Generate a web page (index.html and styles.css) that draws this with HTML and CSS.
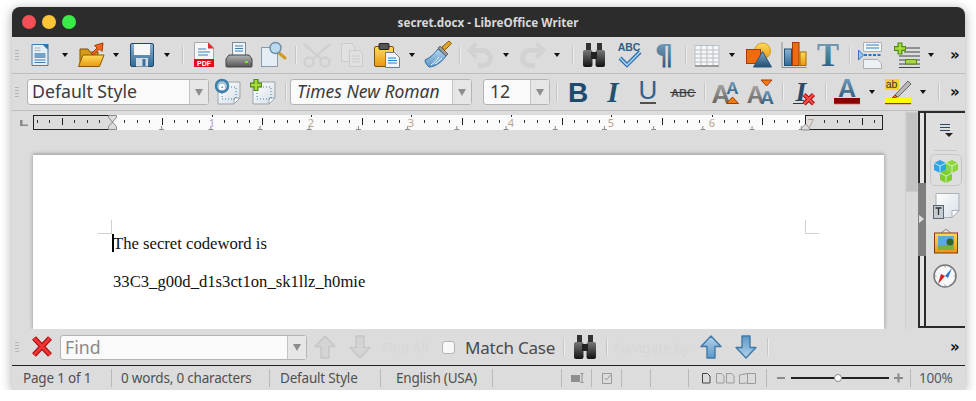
FILE: index.html
```html
<!DOCTYPE html>
<html lang="en">
<head>
    <meta charset="UTF-8">
    <title>secret.docx - LibreOffice Writer</title>
    <link rel="stylesheet" href="styles.css">
</head>
<body>
    <!-- shared gradients and repeated icons -->
    <svg class="defs" width="0" height="0">
        <defs>
            <linearGradient id="gBlue" x1="0" y1="0" x2="0" y2="1"><stop offset="0" stop-color="#8db3d2"/><stop offset="1" stop-color="#2f6a97"/></linearGradient>
            <linearGradient id="gSteel" x1="0" y1="0" x2="0" y2="1"><stop offset="0" stop-color="#7fa8c4"/><stop offset="1" stop-color="#234f73"/></linearGradient>
            <linearGradient id="gGold" x1="0" y1="0" x2="0" y2="1"><stop offset="0" stop-color="#ffdc5c"/><stop offset="1" stop-color="#e8980f"/></linearGradient>
            <linearGradient id="gGray" x1="0" y1="0" x2="0" y2="1"><stop offset="0" stop-color="#b4b4b4"/><stop offset="1" stop-color="#555"/></linearGradient>
            <linearGradient id="gBlack" x1="0" y1="0" x2="0" y2="1"><stop offset="0" stop-color="#777"/><stop offset="1" stop-color="#111"/></linearGradient>
            <linearGradient id="gSky" x1="0" y1="0" x2="0" y2="1"><stop offset="0" stop-color="#b4d4ec"/><stop offset="1" stop-color="#5d97c6"/></linearGradient>
            <linearGradient id="gPaper" x1="0" y1="0" x2="1" y2="1"><stop offset="0" stop-color="#fff"/><stop offset="1" stop-color="#d5dee6"/></linearGradient>
            <symbol id="binoculars" viewBox="0 0 28 28">
                <rect x="6" y="2" width="5" height="8" fill="#333"/>
                <rect x="17" y="2" width="5" height="8" fill="#333"/>
                <rect x="3" y="9" width="9.5" height="17" rx="2" fill="url(#gBlack)"/>
                <rect x="15.5" y="9" width="9.5" height="17" rx="2" fill="url(#gBlack)"/>
                <rect x="11" y="11" width="6" height="7" fill="#222"/>
            </symbol>
            <symbol id="arrow-disabled" viewBox="0 0 28 28">
                <path d="M14 3L24 13.5h-6V25h-8V13.5H4z" fill="#d4d4d4" stroke="#c6c6c6" stroke-width="1.4" stroke-linejoin="round"/>
            </symbol>
            <symbol id="arrow-blue" viewBox="0 0 28 28">
                <path d="M14 3L24 13.5h-6V25h-8V13.5H4z" fill="url(#gSky)" stroke="#3f79a9" stroke-width="1.4" stroke-linejoin="round"/>
            </symbol>
            <symbol id="style-doc" viewBox="0 0 28 28">
                <path d="M4 4h22v16l-6 6H4z" fill="url(#gPaper)" stroke="#9aa5ae"/>
                <path d="M26 20h-6v6z" fill="#fff" stroke="#9aa5ae"/>
                <path d="M8 9h14v12H8z" fill="none" stroke="#3f7fa8" stroke-dasharray="1 2"/>
            </symbol>
        </defs>
    </svg>

    <div class="window">
        <div class="titlebar">
            <div class="lights">
                <span class="light red"></span>
                <span class="light yellow"></span>
                <span class="light green"></span>
            </div>
            <div class="title">secret.docx - LibreOffice Writer</div>
        </div>

        <!-- standard toolbar -->
        <div class="toolbar">
            <span class="grip"></span>
            <span class="btn"><svg class="ic" viewBox="0 0 28 28"><path d="M6 3.500h11l5 5v16H6z" fill="#e6eef5" stroke="#4a7ba3"/><path d="M16.500 3h6v6z" fill="#2f74a8"/><path d="M8.500 7h6" stroke="#a9b4bd"/><path d="M8.500 9.500h6" stroke="#a9b4bd"/><rect x="8.500" y="12" width="11" height="5" fill="#6fa3cc"/><path d="M8.500 19h11M8.500 21.500h11" stroke="#3f7fb0"/></svg></span>
            <span class="drop"></span>
            <span class="btn"><svg class="ic" viewBox="0 0 28 28"><path d="M3 25V8h8l2 3h8v14z" fill="#d69a1a" stroke="#7a5200"/><path d="M1.500 25.500L6 14h21l-4.500 11.500z" fill="url(#gGold)" stroke="#8a5a00"/><path d="M14 13l6-6-2.500-2.500L26 2l-1 8.500-2.500-2.500-6 6z" fill="#f0641e" stroke="#a83a00" stroke-linejoin="round"/></svg></span>
            <span class="drop"></span>
            <span class="btn"><svg class="ic" viewBox="0 0 28 28"><rect x="2.500" y="2.500" width="23" height="23" rx="1.500" fill="url(#gBlue)" stroke="#22496b"/><rect x="6" y="3" width="16" height="11" fill="#f4f6f8"/><rect x="8" y="17" width="12" height="8.500" fill="#d5dde4"/><rect x="14.500" y="18" width="3" height="7" fill="#3f6f9b"/></svg></span>
            <span class="drop"></span>
            <span class="sep"></span>
            <span class="btn"><svg class="ic" viewBox="0 0 28 28"><path d="M4.500 1.500h14l5 5v12h-19z" fill="#f6f6f6" stroke="#aaa"/><path d="M18 1.500l6 6h-6z" fill="#e8232a"/><path d="M8 8h8M8 11h12M8 14h10" stroke="#3b7fb8"/><rect x="4" y="18" width="20" height="8" fill="#d9101c"/><text class="svg-bold" x="14" y="24.600" font-size="7" fill="#fff" text-anchor="middle">PDF</text></svg></span>
            <span class="btn"><svg class="ic" viewBox="0 0 28 28"><rect x="7.500" y="1.500" width="13" height="14" fill="#f0f4f7" stroke="#7f8b95"/><path d="M10 5h8M10 7.500h8M10 10h8" stroke="#3b7fb8"/><path d="M4 14h20l3 4v7a1 1 0 0 1-1 1H2a1 1 0 0 1-1-1v-7z" fill="url(#gGray)" stroke="#444"/><rect x="20" y="20" width="3" height="2" fill="#7ee23c"/></svg></span>
            <span class="btn"><svg class="ic" viewBox="0 0 28 28"><rect x="1.500" y="6.500" width="16" height="19" fill="#e6eef5" stroke="#8a9aa8"/><path d="M19 12l6 5" stroke="#d19a22" stroke-width="3" stroke-linecap="round"/><circle cx="15.500" cy="7" r="5.500" fill="#bcd9ef" stroke="#6d8ea8" stroke-width="1.400"/></svg></span>
            <span class="sep"></span>
            <span class="btn"><svg class="ic" viewBox="0 0 28 28" fill="none" stroke="#d0d0d0" stroke-width="2.400"><path d="M1 3l17 15M27 3L10 18"/><circle cx="6" cy="21" r="4.500"/><circle cx="22" cy="21" r="4.500"/></svg></span>
            <span class="btn"><svg class="ic" viewBox="0 0 28 28" fill="#e0e0e0" stroke="#cbcbcb"><path d="M3.500 2.500h10l3 3v15h-13z"/><path d="M11.500 9.500h10l3 3v13h-13z"/><path d="M14 15h8M14 18h8M14 21h8" fill="none"/></svg></span>
            <span class="btn"><svg class="ic" viewBox="0 0 28 28"><rect x="1.500" y="5.500" width="19" height="20" rx="1.500" fill="url(#gGold)" stroke="#7a5200"/><rect x="6" y="2.500" width="10" height="6" rx="1" fill="#555" stroke="#222"/><path d="M12.500 11.500h9l5 5v10h-14z" fill="#f2f6fa" stroke="#6d7f8e"/><path d="M15 17h8M15 19.500h9M15 22h9" stroke="#2f7fc0"/></svg></span>
            <span class="drop"></span>
            <span class="btn"><svg class="ic" viewBox="0 0 28 28"><path d="M1 19C6 17 11 12 14 8l8 7c-4 6-11 11-17 11-2-2-4-4-4-7z" fill="url(#gSky)" stroke="#2e6ea6"/><path d="M7 24c3-2 6-5 8-8M11 23c3-2 5-4 7-6" stroke="#fff" fill="none"/><path d="M14 7l8 8 2-2-8-8z" fill="#9a9a9a" stroke="#666"/><path d="M18 6l7-6 2.500 2.500-7 7z" fill="#e0a32c" stroke="#8a5a00"/></svg></span>
            <span class="sep"></span>
            <span class="btn"><svg class="ic" viewBox="0 0 28 28" fill="none" stroke="#d2d2d2" stroke-width="5"><path d="M4 9.500h12a7.500 7.500 0 0 1 0 15h-5"/><path d="M9.500 2.500L2.500 9.500l7 7" stroke-width="4"/></svg></span>
            <span class="drop"></span>
            <span class="btn"><svg class="ic flip" viewBox="0 0 28 28" fill="none" stroke="#d2d2d2" stroke-width="5"><path d="M4 9.500h12a7.500 7.500 0 0 1 0 15h-5"/><path d="M9.500 2.500L2.500 9.500l7 7" stroke-width="4"/></svg></span>
            <span class="drop"></span>
            <span class="sep"></span>
            <span class="btn"><svg class="ic" viewBox="0 0 28 28"><use href="#binoculars"/></svg></span>
            <span class="btn"><svg class="ic" viewBox="0 0 28 28"><text class="svg-bold" x="14" y="10" font-size="10.500" fill="#2f5f88" text-anchor="middle">ABC</text><path d="M5 17l7 7L25 11" fill="none" stroke="#2a6cb0" stroke-width="4"/><path d="M5 17l7 7L25 11" fill="none" stroke="#a6d0ef" stroke-width="1.600"/></svg></span>
            <span class="btn"><svg class="ic" viewBox="0 0 28 28"><text class="svg-dejavu" x="14" y="24" font-size="29" fill="url(#gSteel)" text-anchor="middle">¶</text></svg></span>
            <span class="sep"></span>
            <span class="btn"><svg class="ic" viewBox="0 0 28 28"><rect x="2" y="4.500" width="24" height="20" fill="#f4f6f8"/><path d="M2 4.500h24M2 9h24M2 13h24M2 17h24M2 21h24M2 4.500v20M8 4.500v20M14 4.500v20M20 4.500v20M26 4.500v20" stroke="#b9bfc4" fill="none"/><path d="M2 25h24" stroke="#9b9b9b" stroke-width="2"/></svg></span>
            <span class="drop"></span>
            <span class="btn"><svg class="ic" viewBox="0 0 28 28"><circle cx="18.500" cy="10" r="8" fill="url(#gGold)" stroke="#d99a1a"/><rect x="2.500" y="8.500" width="14" height="14" fill="#f06a10" stroke="#a53b00"/><path d="M18.500 10.500l9 15.500h-18z" fill="url(#gSteel)" stroke="#2a5578"/></svg></span>
            <span class="btn"><svg class="ic" viewBox="0 0 28 28"><path d="M3 1v25.500h24.500" fill="none" stroke="#8d8d8d"/><rect x="5.500" y="8" width="7" height="16.500" fill="url(#gBlue)" stroke="#234f73"/><rect x="13.500" y="1.500" width="6.500" height="23" fill="#ef6a14" stroke="#a53b00"/><rect x="21" y="11" width="6" height="13.500" fill="url(#gGold)" stroke="#a06b00"/></svg></span>
            <span class="btn"><svg class="ic" viewBox="0 0 28 28"><text class="svg-serif-bold" x="14" y="25" font-size="33" fill="url(#gSteel)" text-anchor="middle">T</text></svg></span>
            <span class="sep"></span>
            <span class="btn"><svg class="ic" viewBox="0 0 28 28"><path d="M6.500 1.500h18v9h-18z" fill="#f4f6f8" stroke="#a9b0b6"/><path d="M9 4h13M9 7h13" stroke="#2f7fc0"/><path d="M7 14h18" stroke="#2f74c8" stroke-width="2" stroke-dasharray="3 1.500"/><path d="M1.500 9l5 5-5 5z" fill="#9cc6ec" stroke="#2f74c8"/><path d="M6.500 18.500h14l4 4v5h-18z" fill="#eef1f4" stroke="#a9b0b6"/></svg></span>
            <span class="btn"><svg class="ic" viewBox="0 0 28 28"><path d="M7 7h21M12 11h16M7 15h21M7 19h8M25 19h3M7 23h21M7 26.500h21" stroke="#3c4650" stroke-width="1.200"/><rect x="13.500" y="18.500" width="11" height="4.500" fill="#a8d44a" stroke="#5f8a10"/><path d="M8 1.500v12M2 7.500h12" stroke="#4c8a10" stroke-width="5"/><path d="M8 2.500v10M3 7.500h10" stroke="#a8dc3c" stroke-width="2.600"/></svg></span>
            <span class="drop"></span>
            <span class="more">»</span>
        </div>

        <!-- formatting toolbar -->
        <div class="toolbar">
            <span class="grip grip-short"></span>
            <div class="combo style-box"><span class="combo-text">Default Style</span><span class="combo-arrow"></span></div>
            <span class="btn"><svg class="ic" viewBox="0 0 28 28"><use href="#style-doc"/><circle cx="8" cy="8" r="6" fill="none" stroke="#3f7fa8" stroke-width="2.600"/><path d="M4 9a4 3.500 0 0 1 8-1" fill="none" stroke="#8fc0dc" stroke-width="1.400"/></svg></span>
            <span class="btn"><svg class="ic" viewBox="0 0 28 28"><use href="#style-doc"/><path d="M7 1v12M1 7h12" stroke="#4c8a10" stroke-width="5"/><path d="M7 2v10M2 7h10" stroke="#a8dc3c" stroke-width="2.600"/></svg></span>
            <span class="sep sep-tight"></span>
            <div class="combo font-box"><span class="combo-text font-name">Times New Roman</span><span class="combo-arrow"></span></div>
            <div class="combo size-box"><span class="combo-text">12</span><span class="combo-arrow"></span></div>
            <span class="sep"></span>
            <span class="btn"><svg class="ic" viewBox="0 0 28 28"><text class="svg-bold" x="14" y="24" font-size="28" fill="#1f4a6e" text-anchor="middle">B</text></svg></span>
            <span class="btn"><svg class="ic" viewBox="0 0 28 28"><text class="svg-italic" x="14" y="24" font-size="29" fill="#234f73" text-anchor="middle">I</text></svg></span>
            <span class="btn"><svg class="ic" viewBox="0 0 28 28"><text class="svg-sans" x="14" y="21" font-size="26" fill="#33628a" text-anchor="middle">U</text><path d="M6 25h16" stroke="#222" stroke-width="1.400"/></svg></span>
            <span class="btn"><svg class="ic" viewBox="0 0 28 28"><text class="svg-bold" x="14" y="18.500" font-size="11" fill="#555" text-anchor="middle">ABC</text><path d="M1 14.500h26" stroke="#333" stroke-width="1.200"/></svg></span>
            <span class="sep"></span>
            <span class="btn"><svg class="ic" viewBox="0 0 28 28"><text class="svg-bold" x="9" y="25" font-size="26" fill="url(#gGray)" text-anchor="middle">A</text><text class="svg-bold" x="20.500" y="16" font-size="17" fill="url(#gSteel)" text-anchor="middle">A</text><path d="M20.500 19l6 6.500h-12z" fill="#f07a10" stroke="#a53b00"/></svg></span>
            <span class="btn"><svg class="ic" viewBox="0 0 28 28"><text class="svg-bold" x="8.500" y="25" font-size="24" fill="url(#gGray)" text-anchor="middle">A</text><text class="svg-bold" x="20" y="26" font-size="19" fill="url(#gSteel)" text-anchor="middle">A</text><path d="M19.500 8l-5.500-6h11z" fill="#f07a10" stroke="#a53b00"/></svg></span>
            <span class="sep"></span>
            <span class="btn"><svg class="ic" viewBox="0 0 28 28"><text class="svg-italic" x="11" y="23" font-size="28" fill="#2a4a66" text-anchor="middle">I</text><path d="M3 25.500h13" stroke="#333" stroke-width="1.200"/><path d="M14 16.500l9.500 9.500M23.500 16.500L14 26" stroke="#b01010" stroke-width="4.400"/><path d="M14 16.500l9.500 9.500M23.500 16.500L14 26" stroke="#ff4a4a" stroke-width="2"/></svg></span>
            <span class="sep"></span>
            <span class="btn"><svg class="ic" viewBox="0 0 28 28"><text class="svg-bold" x="14" y="19" font-size="25" fill="url(#gSteel)" text-anchor="middle">A</text><rect x="1" y="20" width="26" height="5" fill="#8b0000"/><rect x="1" y="25" width="26" height="1.200" fill="#f00"/></svg></span>
            <span class="drop"></span>
            <span class="btn"><svg class="ic" viewBox="0 0 28 28"><rect x="1" y="1" width="14" height="11" fill="#f4d32a"/><text class="svg-sans" x="7.500" y="10" font-size="10.500" fill="#333" text-anchor="middle">ab</text><path d="M11 17L24 3l3 3-13 13z" fill="#b9b9b9" stroke="#666"/><path d="M11 17l-3 3 5-1z" fill="#ef8a1c" stroke="#a53b00"/><rect x="1" y="20" width="26" height="5" fill="#ff0"/><rect x="1" y="25" width="26" height="1.200" fill="#f00"/></svg></span>
            <span class="drop"></span>
            <span class="sep"></span>
            <span class="more">»</span>
        </div>

        <div class="main">
            <div class="workspace">
                <div class="ruler-row">
                    <svg class="tab-corner" width="8" height="8" viewBox="0 0 8 8"><path d="M0 1h2.500v4.500H8V7H0z" fill="#8a8a8a"/></svg>
                    <svg class="ruler" width="850" height="18" viewBox="33 114 850 18" shape-rendering="crispEdges">
                        <defs>
                            <pattern id="ticks" x="112" y="114" width="100" height="18" patternUnits="userSpaceOnUse">
                                <path d="M12.500 6v3M25 6v3M37.500 6v3M62.500 6v3M75 6v3M87.500 6v3" stroke="#333"/>
                                <path d="M50 4v7" stroke="#222"/>
                            </pattern>
                            <pattern id="tabs" x="109" y="114" width="49.200" height="18" patternUnits="userSpaceOnUse">
                                <path d="M3 12v4M0.500 15.500h5" stroke="#8a8a8a"/>
                            </pattern>
                        </defs>
                        <rect x="112" y="115" width="693" height="15" fill="#fafafa"/>
                        <rect x="33.500" y="115.500" width="78.500" height="14" fill="#dcdcdc" stroke="#222"/>
                        <rect x="805" y="115.500" width="77" height="14" fill="#dcdcdc" stroke="#222"/>
                        <rect x="33" y="115" width="850" height="15" fill="url(#ticks)"/>
                        <rect x="140" y="115" width="665" height="17" fill="url(#tabs)"/>
                        <g class="ruler-nums" font-size="11" fill="#b8a590" text-anchor="middle" shape-rendering="auto">
                            <text x="212" y="127">1</text><text x="311" y="127">2</text><text x="411" y="127">3</text><text x="511" y="127">4</text><text x="611" y="127">5</text><text x="712" y="127">6</text><text x="811" y="127">7</text>
                        </g>
                        <path d="M212 115v2M311 115v2M411 115v2M511 115v2M611 115v2M712 115v2" stroke="#333"/>
                        <path d="M108.500 115.500h8v2l-4 4.500 4 4.500v3h-8v-3l4-4.500-4-4.500z" fill="#dcdcdc" stroke="#8a8a8a" shape-rendering="auto"/>
                        <path d="M801.500 130v-2l4-4 4 4v2z" fill="#dcdcdc" stroke="#8a8a8a" shape-rendering="auto"/>
                    </svg>
                </div>
                <div class="page">
                    <span class="crop crop-left"></span>
                    <span class="crop crop-right"></span>
                    <span class="cursor"></span>
                    <p>The secret codeword is</p>
                    <p>33C3_g00d_d1s3ct1on_sk1llz_h0mie</p>
                </div>
            </div>
            <div class="scrollbar"><div class="thumb"></div></div>
            <div class="deck">
                <div class="splitter"><span class="handle"></span></div>
                <div class="sidebar">
                    <svg class="side-menu" width="16" height="16" viewBox="0 0 16 16"><path d="M2 2.500h10M2 5.500h10M2 8.500h10" stroke="#2c4a66" stroke-width="1.200"/><path d="M7 11h8l-4 4z" fill="#222"/></svg>
                    <div class="side-sep"></div>
                    <div class="side-btn"><svg class="ic" viewBox="0 0 28 28"><path d="M2 7l6-3 6 3v7l-6 3-6-3z" fill="#2ea6e6"/><path d="M14 7l6-3 6 3v7l-6 3-6-3z" fill="#8ed63a"/><path d="M8 17l6-3 6 3v7l-6 3-6-3z" fill="#7fcf2c"/><path d="M2 7l6 3 6-3M8 10v7M14 7l6 3 6-3M20 10v7M8 17l6 3 6-3M14 20v7" fill="none" stroke="#e6f5ff" stroke-width=".8"/></svg></div>
                    <div class="side-cell"><svg class="ic" viewBox="0 0 28 28"><path d="M4 1.500h23v17l-7 7H4z" fill="url(#gPaper)" stroke="#a8b0b8"/><path d="M27 18.500h-7v7z" fill="#fff" stroke="#a8b0b8"/><rect x="1.500" y="13.500" width="10" height="13" fill="#c4ccd2" stroke="#5c6670"/><path d="M3.500 16h6M6.500 16v7" stroke="#333" stroke-width="1.300"/></svg></div>
                    <div class="side-cell"><svg class="ic" viewBox="0 0 28 28"><path d="M9 6l5-4 5 4" fill="none" stroke="#888"/><rect x="2.500" y="6" width="23" height="20" fill="url(#gGold)" stroke="#8a3a00"/><rect x="6" y="9" width="16" height="14" fill="#5ea8e0"/><path d="M6 18h16v5H6z" fill="#7ab03c"/><circle cx="18" cy="15" r="3.500" fill="#2f6a20"/></svg></div>
                    <div class="side-cell"><svg class="ic compass" viewBox="0 0 28 28"><circle cx="14" cy="14" r="11" fill="#f6f8fa" stroke="#777" stroke-width="1.500"/><path d="M14 14l7-8-4 10z" fill="#2f74d0"/><path d="M14 14l-7 8 3-10z" fill="#e01818"/><path d="M14 3.500v2M14 22.500v2M3.500 14h2M22.500 14h2" stroke="#999"/></svg></div>
                </div>
            </div>
        </div>

        <!-- find bar -->
        <div class="toolbar findbar">
            <span class="grip grip-find"></span>
            <span class="btn"><svg class="ic" viewBox="0 0 28 28"><path d="M6 5l16 17M22 5L6 22" stroke="#a80f0f" stroke-width="5.400"/><path d="M6 5l16 17M22 5L6 22" stroke="#f23434" stroke-width="3"/></svg></span>
            <div class="combo find-box"><span class="combo-text find-text">Find</span><span class="combo-arrow"></span></div>
            <span class="btn"><svg class="ic" viewBox="0 0 28 28"><use href="#arrow-disabled"/></svg></span>
            <span class="btn"><svg class="ic flip-v" viewBox="0 0 28 28"><use href="#arrow-disabled"/></svg></span>
            <span class="faint find-all">Find All</span>
            <span class="check"></span>
            <span class="match">Match Case</span>
            <span class="sep"></span>
            <span class="btn"><svg class="ic" viewBox="0 0 28 28"><use href="#binoculars"/></svg></span>
            <span class="sep"></span>
            <span class="faint nav-by">Navigate by</span>
            <span class="btn"><svg class="ic" viewBox="0 0 28 28"><use href="#arrow-blue"/></svg></span>
            <span class="btn"><svg class="ic flip-v" viewBox="0 0 28 28"><use href="#arrow-blue"/></svg></span>
            <span class="sep"></span>
            <span class="more">»</span>
        </div>

        <div class="statusbar">
            <span class="cell c-page">Page 1 of 1</span>
            <span class="cell c-words">0 words, 0 characters</span>
            <span class="cell c-style">Default Style</span>
            <span class="cell c-lang">English (USA)</span>
            <span class="cell c-blank"></span>
            <span class="cell c-icon"><svg width="14" height="12" viewBox="0 0 14 12"><rect x="1" y="3" width="9" height="7" fill="#8f8f8f"/><path d="M10.500 1.500h3M12 1.500v9M10.500 10.500h3" stroke="#8f8f8f"/></svg></span>
            <span class="cell c-icon"><svg width="14" height="13" viewBox="0 0 14 13"><path d="M2.500 1.500h9v10h-9z" fill="none" stroke="#9a9a9a"/><path d="M4.500 6l2 2 4-5" fill="none" stroke="#9a9a9a"/></svg></span>
            <span class="cell c-gap"></span>
            <span class="cell c-gap2"></span>
            <span class="cell c-layout"><svg width="58" height="12" viewBox="0 0 58 12" fill="none"><path d="M3.500 1.500h5l2.500 2.500v7H3.500z" stroke="#444"/><path d="M17.500 1.500h5l2.500 2.500v7h-7.500zM27.500 1.500h5l2.500 2.500v7h-7.500zM40.500 3l8-1.500v9.500l-8 .500zM48.500 1.500h8v10h-8z" stroke="#9a9a9a"/></svg></span>
            <span class="cell c-zoom"><svg width="130" height="12" viewBox="0 0 130 12"><path d="M3 6h8" stroke="#8a8a8a" stroke-width="2"/><path d="M17 6h98" stroke="#222" stroke-width="2"/><path d="M120 6h9M124.500 1.500v9" stroke="#8a8a8a" stroke-width="2"/><circle cx="64" cy="6" r="3.500" fill="#fff" stroke="#8a8a8a"/></svg></span>
            <span class="cell c-pct">100%</span>
        </div>
    </div>
</body>
</html>
```

FILE: styles.css
```css
body {
    margin: 0;
    background-color: #fff;
    font-family: "Noto Sans", sans-serif;
    color: #444;
}
.defs {
    display: block;
    height: 0;
}
.window {
    width: 953px;
    height: 383px;
    margin: 7px 0 0 12px;
    display: flex;
    flex-direction: column;
    border-radius: 8px 8px 0 0;
    overflow: hidden;
    background-color: #dcdcdc;
    box-shadow: 0 2px 12px rgba(0,0,0,0.35);
}

/* title bar */
.titlebar {
    height: 30px;
    flex: none;
    display: flex;
    align-items: center;
    background-color: #2c2c2c;
    position: relative;
}
.lights {
    display: flex;
    gap: 6px;
    margin-left: 10px;
}
.light {
    width: 14px;
    height: 14px;
    border-radius: 50%;
}
.red { background-color: #f25056; }
.yellow { background-color: #fac536; }
.green { background-color: #39ea49; }
.title {
    position: absolute;
    left: -1px;
    right: 0;
    text-align: center;
    font-size: 11.7px;
    font-weight: 700;
    color: #d8d8d8;
}

/* toolbars */
.toolbar {
    height: 37px;
    flex: none;
    display: flex;
    align-items: center;
    border-bottom: 1px solid #bdbdbd;
    box-sizing: border-box;
}
.grip {
    width: 10px;
    height: 10px;
    flex: none;
    box-sizing: border-box;
    border-left: 3px solid transparent;
    border-right: 3px solid transparent;
    background: repeating-linear-gradient(#b4b4b4 0 1px, transparent 1px 3px) content-box;
}
.grip-short { width: 15px; border-right-width: 8px; }
.grip-find { width: 12px; border-right-width: 5px; }
.btn {
    width: 35px;
    flex: none;
    display: flex;
    justify-content: center;
}
.ic {
    width: 28px;
    height: 28px;
    display: block;
    overflow: visible;
}
.flip { transform: scaleX(-1); }
.flip-v { transform: scaleY(-1); }
.drop {
    width: 16px;
    flex: none;
    display: flex;
    justify-content: center;
}
.drop::after {
    content: "";
    border-left: 3.5px solid transparent;
    border-right: 3.5px solid transparent;
    border-top: 4px solid #111;
}
.drop + .sep { margin-left: 3px; }
.sep {
    width: 8px;
    height: 18px;
    flex: none;
    display: flex;
    justify-content: center;
}
.sep::after {
    content: "";
    width: 1px;
    background-color: #c6c6c6;
    box-shadow: 1px 0 #ececec;
}
.sep-tight { margin-left: 1px; }
.more {
    margin-left: auto;
    width: 15px;
    font-family: "DejaVu Sans", sans-serif;
    font-size: 15px;
    font-weight: 700;
    color: #111;
    line-height: 1;
}

/* combo boxes */
.combo {
    height: 26px;
    box-sizing: border-box;
    flex: none;
    display: flex;
    border: 1px solid #b4b4b4;
    border-radius: 3px;
    background-color: #fafafa;
    font-size: 17.7px;
    color: #3c3c3c;
}
.combo-text {
    flex: 1;
    padding-left: 4px;
    line-height: 23px;
    white-space: nowrap;
    overflow: hidden;
}
.combo-arrow {
    width: 18px;
    flex: none;
    display: flex;
    align-items: center;
    justify-content: center;
    border-left: 1px solid #c4c4c4;
    background-color: #e6e6e6;
}
.combo-arrow::after {
    content: "";
    border-left: 4px solid transparent;
    border-right: 4px solid transparent;
    border-top: 7px solid #8e8e8e;
}
.style-box { width: 182px; margin-left: 0; }
.style-box + .btn { margin-left: 1px; }
.font-box { width: 182px; margin-left: 1px; }
.font-name { font-style: italic; padding-left: 6px; font-size: 17.5px; }
.size-box { width: 67px; margin-left: 11px; }
.size-box + .sep { margin-left: 2px; }
.size-box .combo-text { padding-left: 6px; }
.find-box { width: 247px; height: 25px; margin-left: 1px; }
.find-text { color: #8a8a8a; }

/* svg glyphs */
.svg-bold { font-family: "Liberation Sans", sans-serif; font-weight: 700; }
.svg-sans { font-family: "Liberation Sans", sans-serif; }
.svg-dejavu { font-family: "DejaVu Sans", sans-serif; font-weight: 700; }
.svg-serif-bold { font-family: "Liberation Serif", serif; font-weight: 700; }
.svg-italic { font-family: "Liberation Serif", serif; font-style: italic; font-weight: 700; }
.ruler-nums { font-family: "Noto Sans", sans-serif; }

/* document area */
.main {
    flex: 1;
    display: flex;
    min-height: 0;
}
.workspace {
    width: 893px;
    flex: none;
    display: flex;
    flex-direction: column;
    overflow: hidden;
}
.ruler-row {
    height: 18px;
    flex: none;
    display: flex;
    align-items: center;
    padding: 3px 0 0 8px;
}
.tab-corner { margin-right: 5px; }
.page {
    flex: 1;
    position: relative;
    width: 851px;
    box-sizing: border-box;
    margin: 22px 0 0 21px;
    padding: 80px 0 0 80px;
    background-color: #fff;
    border-top: 1px solid #b4b4b4;
    box-shadow: 0 0 4px rgba(0,0,0,0.35);
    font-family: "Liberation Serif", serif;
    font-size: 16.65px;
    line-height: 18px;
    color: #111;
}
.page p {
    margin: 0 0 20px;
}
.crop {
    position: absolute;
    top: 65px;
    width: 14px;
    height: 14px;
    box-sizing: border-box;
    border-bottom: 1px solid #d0d0d0;
}
.crop-left { left: 65px; border-right: 1px solid #d0d0d0; }
.crop-right { left: 772px; border-left: 1px solid #d0d0d0; }
.cursor {
    position: absolute;
    left: 79px;
    top: 79px;
    width: 2px;
    height: 18px;
    background-color: #000;
}
.scrollbar {
    width: 13px;
    flex: none;
    box-sizing: border-box;
    padding-top: 1px;
    background-color: #dadada;
    border-left: 1px solid #cfcfcf;
}
.thumb {
    height: 80px;
    background-color: #c2c2c2;
    border: 1px solid #cbcbcb;
    box-sizing: border-box;
}
.deck {
    flex: 1;
    display: flex;
    height: 217px;
    box-sizing: border-box;
    border-top: 2px solid #2a2a2a;
    border-bottom: 2px solid #2a2a2a;
}
.splitter {
    width: 8px;
    flex: none;
    box-sizing: border-box;
    position: relative;
    background-color: #e4e4e4;
    border-left: 2px solid #2a2a2a;
    border-right: 2px solid #2a2a2a;
}
.handle {
    position: absolute;
    left: -2px;
    top: 70px;
    width: 8px;
    height: 73px;
    background-color: #7f7f7f;
}
.handle::after {
    content: "";
    position: absolute;
    left: 1px;
    top: 32px;
    border-top: 4px solid transparent;
    border-bottom: 4px solid transparent;
    border-left: 5px solid #e0e0e0;
}
.sidebar {
    flex: 1;
    display: flex;
    flex-direction: column;
    align-items: center;
    padding-top: 9px;
    background-color: #dedede;
}
.side-menu { display: block; flex: none; }
.side-sep {
    width: 23px;
    height: 1px;
    flex: none;
    margin-top: 12px;
    background-color: #c8c8c8;
}
.side-btn {
    width: 32px;
    height: 32px;
    flex: none;
    margin-top: 3px;
    box-sizing: border-box;
    display: flex;
    align-items: center;
    justify-content: center;
    border: 1px solid #c6c6c6;
    border-radius: 5px;
}
.side-btn + .side-cell { margin-top: 2px; }
.side-cell {
    height: 35px;
    flex: none;
    display: flex;
    align-items: center;
}
.compass { margin-left: -1px; }

/* find bar */
.findbar {
    border-bottom: 1px solid #222;
}
.faint {
    font-size: 13.6px;
    color: #d7d7d7;
    white-space: nowrap;
}
.find-all { width: 47px; margin-left: 5px; }
.check {
    width: 13px;
    height: 13px;
    flex: none;
    margin-left: 13px;
    box-sizing: border-box;
    border: 1px solid #b4b4b4;
    border-radius: 3px;
    background-color: #f8f8f8;
}
.match {
    width: 90px;
    margin: 0 4px 0 10px;
    font-size: 17px;
    letter-spacing: -0.2px;
    color: #4a4a4a;
    white-space: nowrap;
}
.nav-by { width: 79px; margin-left: 4px; overflow: hidden; }

/* status bar */
.statusbar {
    height: 24px;
    flex: none;
    display: flex;
    align-items: center;
    font-size: 13.5px;
    letter-spacing: -0.2px;
    color: #505050;
}
.cell {
    height: 18px;
    flex: none;
    box-sizing: border-box;
    display: flex;
    align-items: center;
    white-space: nowrap;
    border-right: 1px solid #b8b8b8;
}
.c-page { width: 100px; padding-left: 11px; }
.c-words { width: 158px; padding-left: 9px; }
.c-style { width: 111px; padding-left: 10px; }
.c-lang { width: 112px; padding-left: 15px; }
.c-blank { width: 69px; }
.c-icon { width: 30px; justify-content: center; }
.c-gap { width: 29px; }
.c-gap2 { width: 38px; }
.c-layout { width: 78px; justify-content: center; }
.c-zoom { width: 144px; padding-left: 7px; }
.c-pct { width: 54px; padding-left: 8px; border-right: none; color: #4c5c70; }
```
